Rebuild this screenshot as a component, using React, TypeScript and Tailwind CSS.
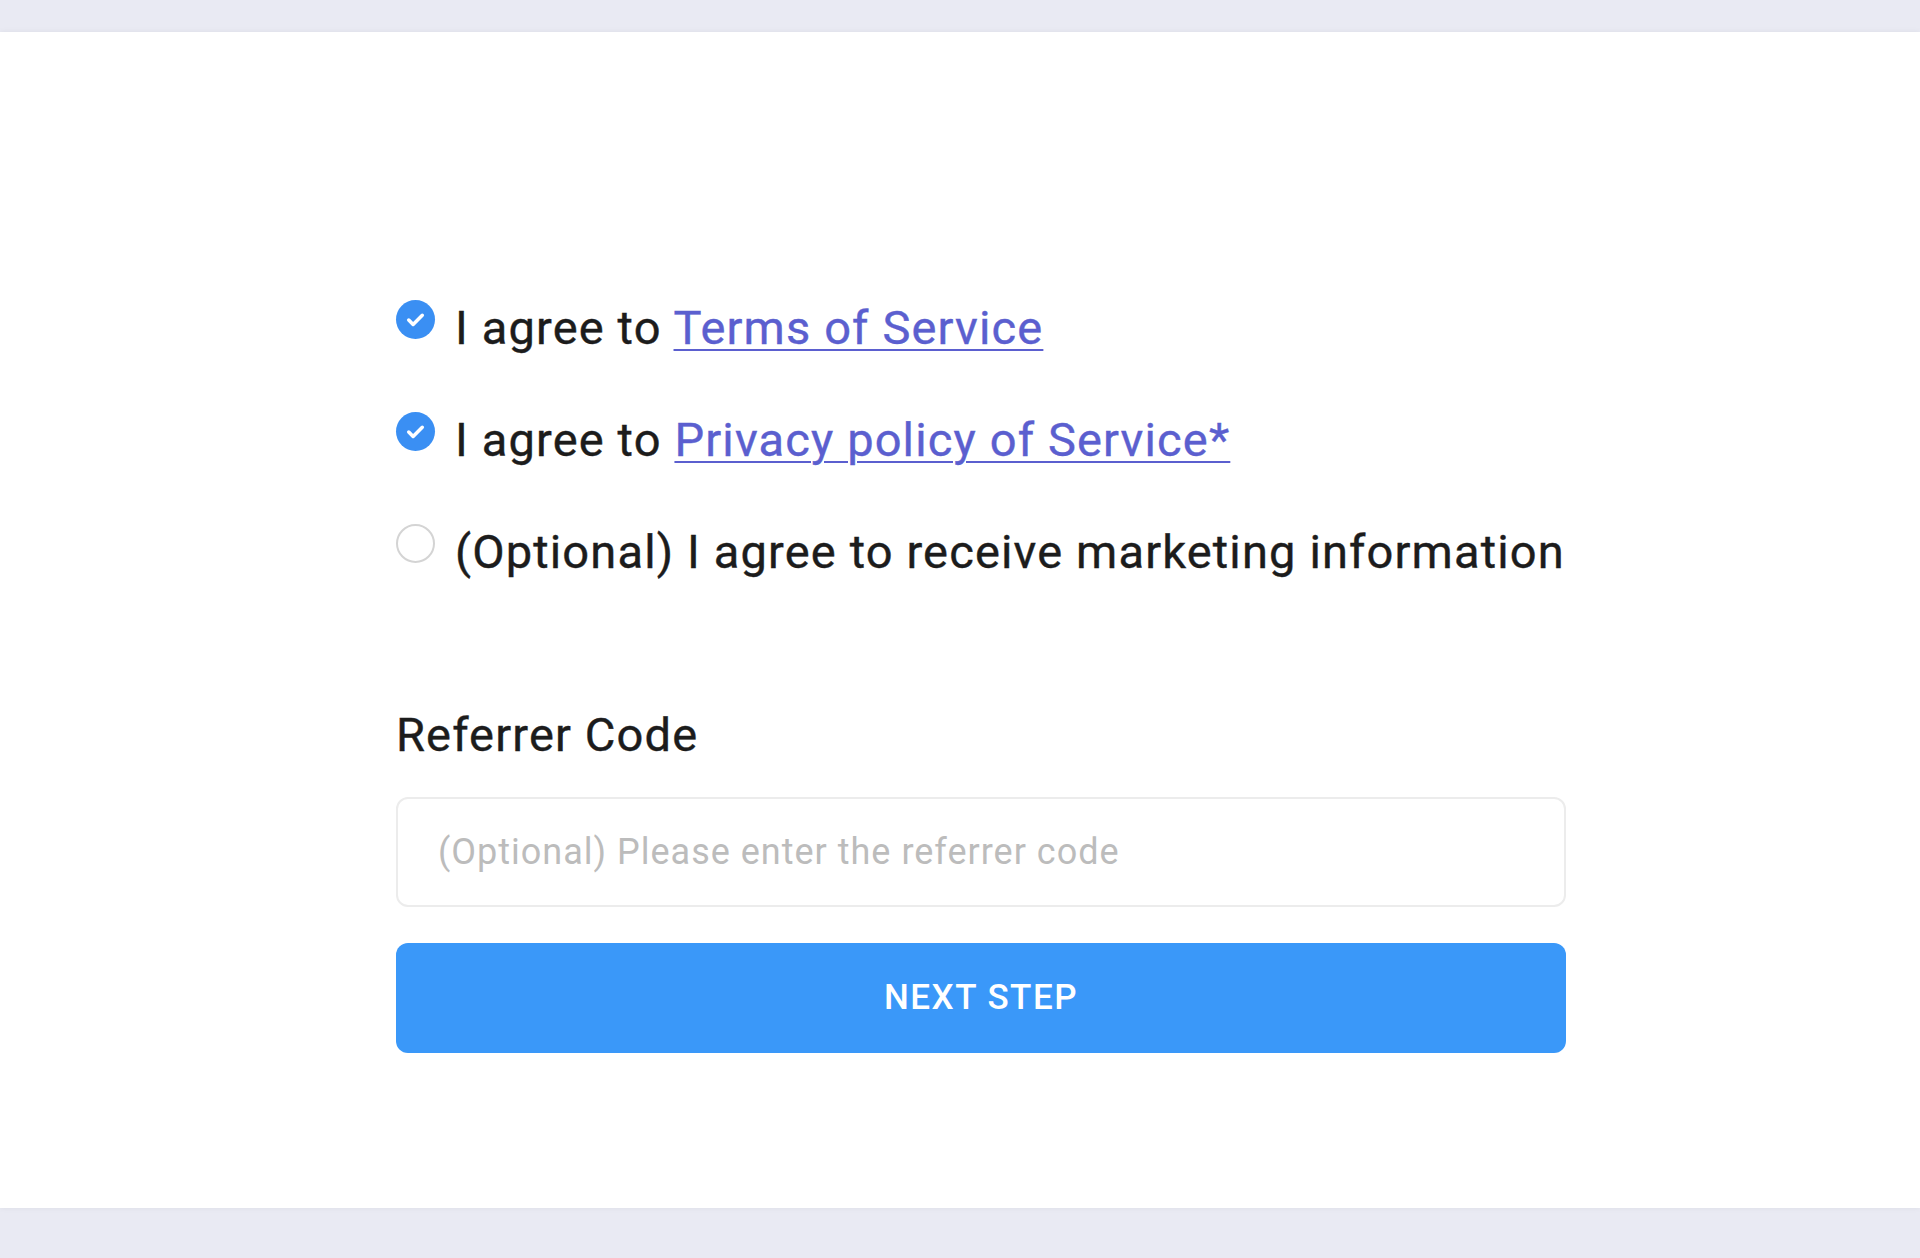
import { useState } from "react";

function CheckCircle({ checked }: { checked: boolean }) {
  if (!checked) {
    return <span className="-mt-[2px] block h-[39px] w-[39px] shrink-0 rounded-full border-2 border-[#d4d4d4] bg-white" />;
  }
  return (
    <span className="-mt-[2px] flex h-[39px] w-[39px] shrink-0 items-center justify-center rounded-full bg-[#3a8ff3]">
      <svg width="25" height="25" viewBox="0 0 24 24" fill="none" aria-hidden="true">
        <path d="M5.5 12.5l4.2 4.2L18.5 8" stroke="white" strokeWidth="3.4" strokeLinecap="round" strokeLinejoin="round" />
      </svg>
    </span>
  );
}

export default function App() {
  const [agree, setAgree] = useState({ terms: true, privacy: true, marketing: false });
  const [code, setCode] = useState("");

  const rows = [
    { key: "terms" as const, pre: "I agree to ", link: "Terms of Service" },
    { key: "privacy" as const, pre: "I agree to ", link: "Privacy policy of Service*" },
    { key: "marketing" as const, pre: "(Optional) I agree to receive marketing information", link: "" },
  ];

  return (
    <div className="flex min-h-[1258px] flex-col bg-[#e9eaf3] font-['Roboto',sans-serif]">
      <div className="h-[32px]" />
      <main className="h-[1176px] bg-white pt-[270px] shadow-[0_0_6px_rgba(0,0,0,0.06)]">
        <div className="ml-[396px] w-[1170px]">
          <div className="flex flex-col gap-[60px]">
            {rows.map((r) => (
              <label
                key={r.key}
                className="flex h-[52px] cursor-pointer items-start gap-[20px]"
                onClick={() => setAgree((a) => ({ ...a, [r.key]: !a[r.key] }))}
              >
                <CheckCircle checked={agree[r.key]} />
                <span className="whitespace-nowrap text-[47px] leading-[52px] tracking-[1.15px] text-[#1c1c1c] [-webkit-text-stroke:0.4px_#1c1c1c]">
                  {r.pre}
                  {r.link && (
                    <a className="text-[#5b5fcf] underline decoration-[2px] underline-offset-[5px] [-webkit-text-stroke:0.4px_#5b5fcf]">
                      {r.link}
                    </a>
                  )}
                </span>
              </label>
            ))}
          </div>

          <div className="mt-[131px] text-[47px] leading-[52px] tracking-[1.15px] text-[#1c1c1c] [-webkit-text-stroke:0.4px_#1c1c1c]">
            Referrer Code
          </div>

          <input
            value={code}
            onChange={(e) => setCode(e.target.value)}
            placeholder="(Optional) Please enter the referrer code"
            className="mt-[36px] block h-[110px] w-full rounded-[12px] border-2 border-[#ececec] bg-white px-[40px] text-[36px] tracking-[1px] text-[#252525] outline-none placeholder:text-[#bcbcbc]"
          />

          <button className="mt-[36px] flex h-[110px] w-full items-center justify-center rounded-[12px] bg-[#3a98f9] text-[35px] font-medium tracking-[1.5px] text-white">
            NEXT STEP
          </button>
        </div>
      </main>
      <div className="flex-1" />
    </div>
  );
}
